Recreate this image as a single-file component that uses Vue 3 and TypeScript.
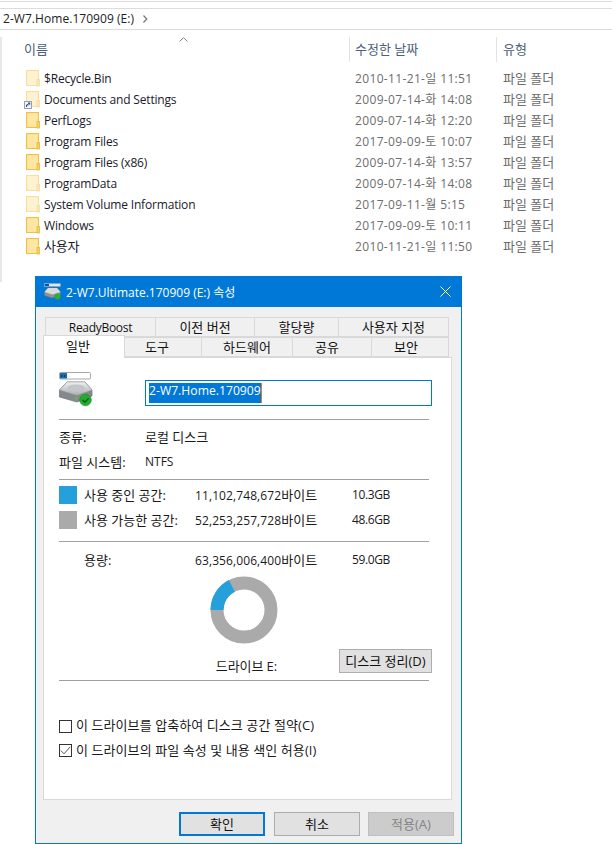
<script setup lang="ts">
interface FileRow {
  name: string;
  date: string;
  hidden?: boolean;
  shortcut?: boolean;
}

interface Tab {
  label: string;
  width: number;
  shift?: number;
  active?: boolean;
}

const rows: FileRow[] = [
  { name: '$Recycle.Bin', date: '2010-11-21-일 11:51', hidden: true },
  { name: 'Documents and Settings', date: '2009-07-14-화 14:08', hidden: true, shortcut: true },
  { name: 'PerfLogs', date: '2009-07-14-화 12:20' },
  { name: 'Program Files', date: '2017-09-09-토 10:07' },
  { name: 'Program Files (x86)', date: '2009-07-14-화 13:57' },
  { name: 'ProgramData', date: '2009-07-14-화 14:08', hidden: true },
  { name: 'System Volume Information', date: '2017-09-11-월 5:15', hidden: true },
  { name: 'Windows', date: '2017-09-09-토 10:11' },
  { name: '사용자', date: '2010-11-21-일 11:50' },
];

const backTabs: Tab[] = [
  { label: 'ReadyBoost', width: 111 },
  { label: '이전 버전', width: 99 },
  { label: '할당량', width: 84 },
  { label: '사용자 지정', width: 110 },
];

// shift: 레이블이 탭 가운데에서 왼쪽으로 밀린 정도
const frontTabs: Tab[] = [
  { label: '일반', width: 82, shift: 6, active: true },
  { label: '도구', width: 77, shift: 6 },
  { label: '하드웨어', width: 91 },
  { label: '공유', width: 79, shift: 5 },
  { label: '보안', width: 77, shift: 4 },
];

const tabStyle = (tab: Tab) => ({
  width: `${tab.width}px`,
  paddingRight: `${(tab.shift ?? 0) * 2}px`,
});

// 도넛 차트: 사용 중인 공간 비율
const usedRatio = 11102748672 / 63356006400;
const radius = 27;
const circumference = 2 * Math.PI * radius;
const usedDash = `${usedRatio * circumference} ${circumference}`;
</script>

<template>
  <div class="page">
    <section class="explorer">
      <div class="address">
        <span>2-W7.Home.170909 (E:)</span>
        <svg class="chevron" width="6" height="8" viewBox="0 0 6 8">
          <path d="M1.5 0.5 L4.8 4 L1.5 7.5" fill="none" stroke="#7a7a7a" stroke-width="1.3" />
        </svg>
      </div>
      <div class="list">
        <div class="columns">
          <div class="col col--name">
            <span>이름</span>
            <svg class="sort" width="9" height="5" viewBox="0 0 9 5">
              <path d="M0.5 4.5 L4.5 0.7 L8.5 4.5" fill="none" stroke="#7f8790" stroke-width="1" />
            </svg>
          </div>
          <div class="col col--date">수정한 날짜</div>
          <div class="col col--type">유형</div>
        </div>
        <div v-for="row in rows" :key="row.name" class="row">
          <div class="row__name">
            <span class="folder" :class="{ 'folder--hidden': row.hidden }">
              <svg width="14" height="17" viewBox="0 0 14 17">
                <rect x="0.5" y="0.5" width="12" height="15" fill="#ffe28f" stroke="#eac34f" />
                <rect x="2" y="2" width="9.5" height="12.5" fill="#ffe7a3" />
                <rect x="11" y="9.5" width="2.5" height="6.5" fill="#f6d266" stroke="#e6b93c" stroke-width="0.8" />
              </svg>
              <svg v-if="row.shortcut" class="shortcut" width="8" height="8" viewBox="0 0 8 8">
                <rect x="0.5" y="0.5" width="7" height="7" fill="#f4f4f8" stroke="#9aa0ac" />
                <path d="M2.5 6 V4 H4.5 M3 4 L5.5 2 M4 2 H5.8 V3.8" fill="none" stroke="#1d4fa8" stroke-width="1" />
              </svg>
            </span>
            <span :class="{ ko: row.name === '사용자' }">{{ row.name }}</span>
          </div>
          <div class="row__date">{{ row.date }}</div>
          <div class="row__type">파일 폴더</div>
        </div>
      </div>
    </section>

    <section class="dialog">
      <header class="titlebar">
        <svg width="17" height="17" viewBox="0 0 17 17">
          <rect x="0.5" y="0.5" width="16" height="3" fill="#dfe6ee" stroke="#8e9aa8" stroke-width="0.6" />
          <rect x="1" y="1" width="4" height="2" fill="#14508f" />
          <path d="M0.5 9 L4 5 H13 L16.5 9 V12 L8 15 L0.5 12.5 Z" fill="#8f9396" stroke="#6c7074" stroke-width="0.5" />
          <path d="M0.5 9 L4 5 H13 L16.5 9 L8.5 11.5 Z" fill="#d9dcde" />
          <circle cx="13.5" cy="13.5" r="3" fill="#26b12f" />
        </svg>
        <span class="titlebar__text">2-W7.Ultimate.170909 (E:) 속성</span>
        <svg class="close" width="11" height="11" viewBox="0 0 11 11">
          <path d="M0.5 0.5 L10.5 10.5 M10.5 0.5 L0.5 10.5" stroke="#fff" stroke-width="1" />
        </svg>
      </header>

      <div class="dialog__body">
        <div class="tabs">
          <div class="tabs__row">
            <div
              v-for="tab in backTabs"
              :key="tab.label"
              class="tab"
              :class="{ 'tab--latin': tab.label === 'ReadyBoost' }"
              :style="tabStyle(tab)"
            >{{ tab.label }}</div>
          </div>
          <div class="tabs__row">
            <div
              v-for="tab in frontTabs"
              :key="tab.label"
              class="tab"
              :class="{ 'tab--active': tab.active }"
              :style="tabStyle(tab)"
            >{{ tab.label }}</div>
          </div>
        </div>

        <div class="panel">
          <div class="identity">
            <svg class="drive" width="34" height="35" viewBox="0 0 34 35">
              <defs>
                <linearGradient id="platter" x1="0" y1="0" x2="0" y2="1">
                  <stop offset="0" stop-color="#eef0f1" />
                  <stop offset="1" stop-color="#a9adb0" />
                </linearGradient>
              </defs>
              <rect x="0.5" y="0.5" width="31" height="6.5" rx="1" fill="#fff" stroke="#a8a8a8" />
              <rect x="1" y="1" width="7" height="5.5" fill="#1b6fb0" />
              <path d="M2 4 H3.2 M5 4 H6.2" stroke="#0d2c4a" stroke-width="1.4" />
              <path d="M0.5 18 L8 10 H26 L33 18 V24 L18 30 L0.5 25 Z" fill="#85898c" stroke="#6e7276" stroke-width="0.7" />
              <path d="M0.5 18 L8 10 H26 L33 18 L18 23.5 Z" fill="url(#platter)" stroke="#93979b" stroke-width="0.5" />
              <ellipse cx="17" cy="16" rx="9" ry="3.6" fill="#c3c6c9" />
              <rect x="16.5" y="24.5" width="2" height="4" fill="#6fb04f" />
              <circle cx="26.5" cy="28" r="5.8" fill="#1fae2c" stroke="#168a20" stroke-width="0.6" />
              <path d="M23.6 28 L25.9 30.2 L29.6 26.4" fill="none" stroke="#0c4d14" stroke-width="1.2" />
            </svg>
            <div class="name-input"><span class="name-input__sel">2-W7.Home.170909</span></div>
          </div>

          <hr class="sep" />

          <div class="info">
            <div class="info__row"><span class="info__label ko">종류:</span><span class="ko">로컬 디스크</span></div>
            <div class="info__row"><span class="info__label ko">파일 시스템:</span><span>NTFS</span></div>
          </div>

          <hr class="sep" />

          <div class="space">
            <div class="space__row">
              <i class="swatch swatch--used"></i>
              <span class="space__label ko">사용 중인 공간:</span>
              <span class="space__bytes">11,102,748,672<span class="ko">바이트</span></span>
              <span class="space__gb">10.3GB</span>
            </div>
            <div class="space__row">
              <i class="swatch swatch--free"></i>
              <span class="space__label ko">사용 가능한 공간:</span>
              <span class="space__bytes">52,253,257,728<span class="ko">바이트</span></span>
              <span class="space__gb">48.6GB</span>
            </div>
          </div>

          <hr class="sep" />

          <div class="capacity">
            <div class="space__row">
              <i class="swatch"></i>
              <span class="space__label ko">용량:</span>
              <span class="space__bytes">63,356,006,400<span class="ko">바이트</span></span>
              <span class="space__gb">59.0GB</span>
            </div>
            <svg class="donut" width="70" height="70" viewBox="0 0 70 70">
              <circle cx="35" cy="35" :r="radius" fill="none" stroke="#aaaaaa" stroke-width="13" />
              <circle
                cx="35"
                cy="35"
                :r="radius"
                fill="none"
                stroke="#26a0da"
                stroke-width="13"
                :stroke-dasharray="usedDash"
                transform="rotate(180 35 35)"
              />
            </svg>
            <div class="drive-row">
              <span class="drive-row__label ko">드라이브 E:</span>
              <button class="btn btn--clean" type="button">디스크 정리(D)</button>
            </div>
          </div>

          <hr class="sep" />

          <div class="options">
            <label class="check">
              <span class="check__box"></span>
              <span class="check__text">이 드라이브를 압축하여 디스크 공간 절약(C)</span>
            </label>
            <label class="check">
              <span class="check__box">
                <svg width="11" height="9" viewBox="0 0 11 9">
                  <path d="M0.8 4.5 L4 7.8 L10.2 0.8" fill="none" stroke="#555" stroke-width="1" />
                </svg>
              </span>
              <span class="check__text">이 드라이브의 파일 속성 및 내용 색인 허용(I)</span>
            </label>
          </div>
        </div>

        <footer class="actions">
          <button class="btn btn--primary" type="button">확인</button>
          <button class="btn" type="button">취소</button>
          <button class="btn btn--disabled" type="button">적용(A)</button>
        </footer>
      </div>
    </section>
  </div>
</template>

<style scoped>
.page {
  width: 612px;
  height: 844px;
  overflow: hidden;
  background: #fff;
  color: #1a1a1a;
  font-family: "Open Sans", "Noto Sans CJK KR", sans-serif;
  font-size: 12px;
}

.ko {
  font-size: 13px;
}

.explorer {
  height: 276px;
  box-sizing: border-box;
  padding-top: 1px;
}

.address {
  height: 29px;
  box-sizing: border-box;
  display: flex;
  align-items: flex-start;
  background: linear-gradient(#fff 0 6px, #dcdcdc 6px 7px, #fff 7px);
  border-top: 1px solid #dcdcdc;
  border-bottom: 1px solid #dcdcdc;
  padding: 8px 0 0 3px;
  line-height: 17px;
  letter-spacing: 0.05px;
  color: #222;
}

.chevron {
  margin: 5px 0 0 8px;
}

.list {
  height: 245px;
  margin-top: 7px;
  border-left: 2px solid #e8e8e8;
}

.columns {
  display: grid;
  grid-template-columns: 347px 147px 1fr;
  height: 25px;
  margin-bottom: 6px;
  color: #4c607a;
  font-size: 13px;
}

.col {
  line-height: 24px;
  padding-left: 5px;
  border-left: 1px solid #e2e2e2;
  position: relative;
}

.col--name {
  border-left: 0;
  padding-left: 22px;
}

.col--type {
  padding-left: 6px;
}

.sort {
  position: absolute;
  left: 177px;
  top: 0;
}

.row {
  display: grid;
  grid-template-columns: 347px 147px 1fr;
  height: 21px;
  line-height: 21px;
}

.row__name {
  display: flex;
  align-items: center;
  padding-left: 24px;
  gap: 4px;
  color: #1a1a2a;
  letter-spacing: -0.18px;
}

.row__date {
  padding-left: 6px;
  color: #6d6d6d;
  letter-spacing: 0.35px;
}

.row__type {
  padding-left: 7px;
  color: #6d6d6d;
  font-size: 13px;
}

.folder {
  position: relative;
  display: block;
  width: 14px;
  height: 17px;
}

.folder--hidden > svg:first-child {
  opacity: 0.5;
}

.folder svg {
  display: block;
}

.shortcut {
  position: absolute;
  left: -2px;
  bottom: -1px;
}

.dialog {
  width: 427px;
  height: 568px;
  margin-left: 35px;
  box-sizing: border-box;
  border: 1px solid #0078d7;
  border-top: 0;
  background: #f0f0f0;
  display: flex;
  flex-direction: column;
}

.titlebar {
  height: 31px;
  flex: none;
  background: #0078d7;
  color: #fff;
  display: flex;
  align-items: center;
  padding: 0 10px 0 8px;
}

.titlebar__text {
  margin-left: 5px;
  flex: 1;
}

.dialog__body {
  flex: 1;
  padding: 10px 0 0 7px;
  display: flex;
  flex-direction: column;
  min-height: 0;
}

.tabs {
  height: 40px;
  flex: none;
}

.tabs__row {
  display: flex;
  height: 20px;
  padding-left: 2px;
}

.tab {
  box-sizing: border-box;
  border: 1px solid #d9d9d9;
  border-left: 0;
  background: #f0f0f0;
  text-align: center;
  font-size: 13px;
  line-height: 19px;
  color: #111;
  white-space: nowrap;
}

.tab:first-child {
  border-left: 1px solid #d9d9d9;
}

.tab--latin {
  font-size: 12px;
  letter-spacing: -0.3px;
}

.tab--active {
  position: relative;
  background: #fff;
  margin-left: -2px;
  margin-top: -2px;
  height: 23px;
  line-height: 20px;
  border-bottom: 0;
  z-index: 2;
}

.panel {
  width: 409px;
  height: 443px;
  flex: none;
  box-sizing: border-box;
  background: #fff;
  border: 1px solid #d9d9d9;
  padding: 0 22px 0 15px;
}

.identity {
  height: 61px;
  display: flex;
  align-items: flex-start;
}

.drive {
  margin-top: 14px;
  flex: none;
}

.name-input {
  box-sizing: border-box;
  margin: 22px 0 0 52px;
  width: 287px;
  height: 26px;
  border: 1px solid #0078d7;
  padding: 2px 3px;
  flex: none;
}

.name-input__sel {
  display: block;
  width: fit-content;
  height: 20px;
  background: #0078d7;
  color: #fff;
  border-right: 1px solid #e07a1f;
  font-size: 12.2px;
  line-height: 16px;
}

.sep {
  margin: 0;
  height: 1px;
  border: 0;
  background: #a0a0a0;
  width: 370px;
}

.info {
  height: 59px;
  padding-top: 5px;
  box-sizing: border-box;
}

.info__row {
  display: flex;
  height: 25px;
  line-height: 24px;
}

.info__label {
  width: 86px;
}

.space {
  height: 61px;
  padding-top: 2px;
  box-sizing: border-box;
}

.space__row {
  display: flex;
  align-items: center;
  height: 25px;
}

.swatch {
  width: 18px;
  height: 18px;
  flex: none;
  margin-right: 7px;
}

.swatch--used {
  background: #26a0da;
}

.swatch--free {
  background: #aaaaaa;
}

.space__label {
  width: 111px;
  flex: none;
}

.space__bytes {
  width: 157px;
  flex: none;
  white-space: nowrap;
  letter-spacing: 0.1px;
}

.space__gb {
  letter-spacing: -0.4px;
}

.capacity {
  height: 138px;
  padding-top: 5px;
  box-sizing: border-box;
}

.donut {
  display: block;
  margin: 3px 0 0 150px;
}

.drive-row {
  display: flex;
  align-items: flex-start;
  justify-content: flex-end;
  margin: 4px -3px 0 0;
}

.drive-row__label {
  margin: 6px 62px 0 0;
  line-height: 22px;
  letter-spacing: -0.1px;
}

.btn {
  box-sizing: border-box;
  width: 86px;
  height: 24px;
  padding: 0;
  border: 1px solid #adadad;
  background: #e1e1e1;
  color: #111;
  font: inherit;
  font-size: 13px;
  line-height: 20px;
}

.btn--clean {
  width: 93px;
}

.options {
  padding-top: 33px;
}

.check {
  display: flex;
  align-items: center;
  gap: 4px;
  height: 24.5px;
}

.check__box {
  box-sizing: border-box;
  width: 13px;
  height: 13px;
  border: 1px solid #333;
  display: flex;
  align-items: center;
  justify-content: center;
}

.check__text {
  font-size: 13px;
  letter-spacing: 0.08px;
  line-height: 18px;
  margin-bottom: 2px;
}

.actions {
  display: flex;
  gap: 9px;
  padding: 12px 0 0 136px;
}

.btn--primary {
  border: 2px solid #0078d7;
}

.btn--disabled {
  margin-left: -1px;
  background: #cccccc;
  border-color: #bfbfbf;
  color: #838383;
}
</style>
